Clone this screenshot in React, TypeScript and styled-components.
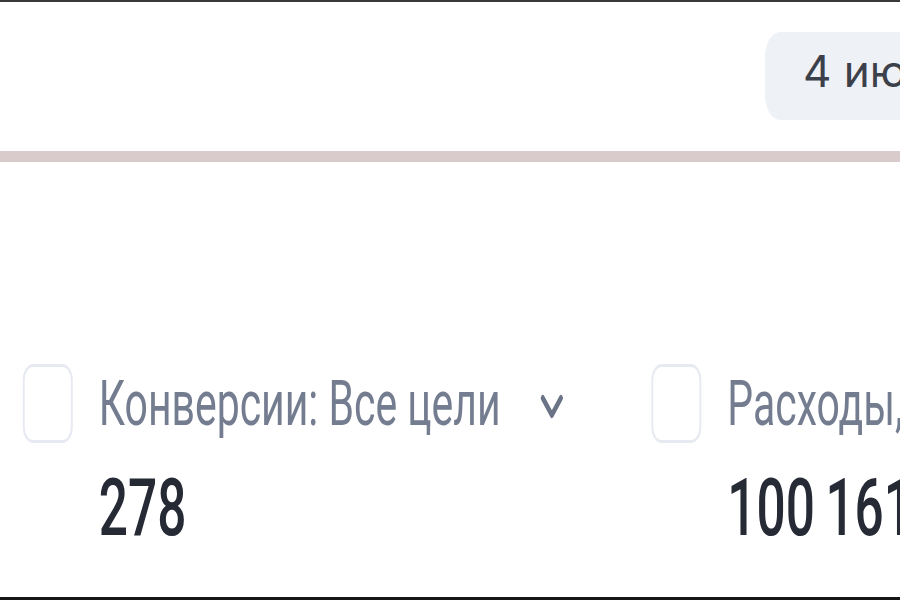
import React from 'react';
import styled, { createGlobalStyle } from 'styled-components';

const GlobalStyle = createGlobalStyle`
  html, body {
    margin: 0;
    padding: 0;
    background: #fff;
    overflow: hidden;
  }

  body {
    font-family: Roboto, "Liberation Sans", sans-serif;
  }
`;

// the metric strip is drawn in a narrow (condensed) way in the reference
const SQUEEZE = 0.65;

const Page = styled.div`
  width: 900px;
  height: 600px;
  box-sizing: border-box;
  border-top: 2px solid #3a3a3a;
  border-bottom: 3px solid #161616;
  overflow: hidden;
  display: flex;
  flex-direction: column;
`;

const Header = styled.header`
  height: 149px;
  box-sizing: border-box;
  padding-top: 30px;
  display: flex;
  justify-content: flex-end;
  margin-right: -260px;
`;

const DatePill = styled.button`
  width: 395px;
  height: 88px;
  box-sizing: border-box;
  border: none;
  border-radius: 15px / 25px;
  background: #eef1f5;
  padding: 0 0 10px 38px;
  display: flex;
  align-items: center;
  font-family: Inter, "Noto Sans", sans-serif;
  font-size: 44px;
  line-height: 1;
  color: #3c404b;
  white-space: nowrap;
  cursor: pointer;
`;

const Divider = styled.div`
  height: 11px;
  background: #d9cbcb;
  flex-shrink: 0;
`;

const MetricStrip = styled.section`
  width: ${900 / SQUEEZE}px;
  box-sizing: border-box;
  padding: 202px 0 0 35px;
  display: flex;
  transform: scaleX(${SQUEEZE});
  transform-origin: left top;
`;

const Metric = styled.div`
  flex: 0 0 967px;
  display: grid;
  grid-template-columns: 77px auto;
  column-gap: 40px;
  row-gap: 26px;
  align-items: center;
  justify-content: start;
`;

const Checkbox = styled.span`
  width: 77px;
  height: 79px;
  box-sizing: border-box;
  border: 3px solid #e7eaf1;
  border-radius: 16px;
  background: #fff;
`;

const LabelRow = styled.div`
  display: flex;
  align-items: center;
  gap: 60px;
`;

const Label = styled.span`
  font-size: 63px;
  line-height: 1;
  color: #747d90;
  white-space: nowrap;
`;

const Chevron = styled.svg`
  width: 38px;
  height: 28px;
  flex-shrink: 0;
  margin-top: 6px;
`;

const Value = styled.div`
  grid-column: 2;
  font-size: 79px;
  font-weight: 500;
  line-height: 1;
  color: #252a35;
  white-space: nowrap;
`;

type MetricData = {
  label: string;
  value: string;
  dropdown?: boolean;
};

const metrics: MetricData[] = [
  { label: 'Конверсии: Все цели', value: '278', dropdown: true },
  { label: 'Расходы, ₽', value: '100\u2009161,52' },
];

export default function App() {
  return (
    <>
      <GlobalStyle />
      <Page>
        <Header>
          <DatePill>4 июля – 10 июля 2024</DatePill>
        </Header>
        <Divider />
        <MetricStrip>
          {metrics.map((m) => (
            <Metric key={m.label}>
              <Checkbox />
              <LabelRow>
                <Label>{m.label}</Label>
                {m.dropdown && (
                  <Chevron viewBox="0 0 38 28" fill="none">
                    <path
                      d="M5 5 L19 22 L33 5"
                      stroke="#6b7386"
                      strokeWidth="6"
                      strokeLinecap="round"
                      strokeLinejoin="round"
                    />
                  </Chevron>
                )}
              </LabelRow>
              <Value>{m.value}</Value>
            </Metric>
          ))}
        </MetricStrip>
      </Page>
    </>
  );
}
